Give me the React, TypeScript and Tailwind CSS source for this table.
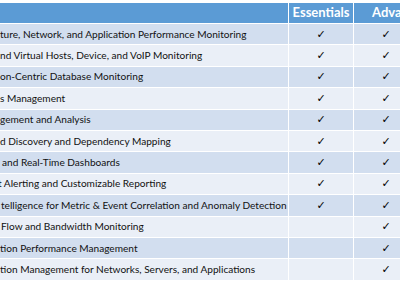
const rows = [
  { label: "ture, Network, and Application Performance Monitoring", pad: "pl-0", essentials: true },
  { label: "nd Virtual Hosts, Device, and VoIP Monitoring", pad: "pl-0", essentials: true },
  { label: "on-Centric Database Monitoring", pad: "pl-0", essentials: true },
  { label: "s Management", pad: "pl-0", essentials: true },
  { label: "gement and Analysis", pad: "pl-0", essentials: true },
  { label: "d Discovery and Dependency Mapping", pad: "pl-0", essentials: true },
  { label: "and Real-Time Dashboards", pad: "pl-[2px]", essentials: true },
  { label: "t Alerting and Customizable Reporting", pad: "-ml-[2px]", essentials: true },
  { label: "telligence for Metric & Event Correlation and Anomaly Detection", pad: "pl-[1px]", essentials: true },
  { label: "Flow and Bandwidth Monitoring", pad: "pl-[1px]", essentials: false },
  { label: "tion Performance Management", pad: "pl-0", essentials: false },
  { label: "tion Management for Networks, Servers, and Applications", pad: "pl-0", essentials: false },
];

function Check() {
  return <span className="text-[11px] leading-none text-black font-['DejaVu_Sans',sans-serif]">✓</span>;
}

export default function App() {
  return (
    <div className="w-[400px] h-[284px] overflow-hidden bg-white pt-[3px] font-['Lato',sans-serif]">
      <div className="grid grid-cols-[288px_64px_64px] gap-x-[1px] gap-y-[1px] w-[418px]">
        <div className="h-[20px] bg-[#5b9bd5]"></div>
        <div className="h-[20px] bg-[#5b9bd5] flex items-center justify-center text-white font-bold text-[13px]">
          Essentials
        </div>
        <div className="h-[20px] bg-[#5b9bd5] flex items-center pl-[18px] text-white font-bold text-[13px] whitespace-nowrap">
          Advanced
        </div>
        {rows.map((r, i) => {
          const bg = i % 2 === 0 ? "bg-[#d2deef]" : "bg-[#eaeff7]";
          return (
            <div key={i} className="contents">
              <div className={`h-[20.4px] ${bg} flex items-center overflow-hidden whitespace-nowrap`}>
                <span className={`${r.pad} text-[10.1px] text-[#111]`}>{r.label}</span>
              </div>
              <div className={`h-[20.4px] ${bg} flex items-center justify-center`}>
                {r.essentials && <Check />}
              </div>
              <div className={`h-[20.4px] ${bg} flex items-center justify-center`}>
                <Check />
              </div>
            </div>
          );
        })}
      </div>
    </div>
  );
}
